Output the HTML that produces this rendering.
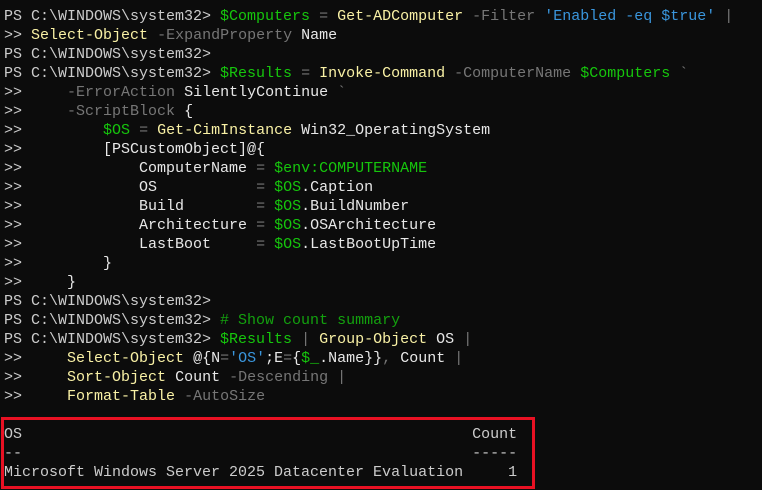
<!DOCTYPE html>
<html><head><meta charset="utf-8"><style>
html,body{margin:0;padding:0;background:#0c0c0c;width:762px;height:490px;overflow:hidden}
pre{margin:0;padding:7px 0 0 4px;font-family:"Liberation Mono",monospace;font-size:15px;line-height:19px;color:#cccccc;white-space:pre}
.g{color:#16c60c}.y{color:#f9f1a5}.d{color:#767676}.c{color:#3a96dd}.w{color:#e8e8e8}.cm{color:#13a10e}
.box{position:absolute;left:1px;top:417px;width:528px;height:66px;border:3px solid #e81123}
</style></head><body>
<pre>PS C:\WINDOWS\system32&gt; <span class="g">$Computers</span> <span class="d">=</span> <span class="y">Get-ADComputer</span> <span class="d">-Filter</span> <span class="c">'Enabled -eq $true'</span> <span class="d">|</span>
&gt;&gt; <span class="y">Select-Object</span> <span class="d">-ExpandProperty</span> <span class="w">Name</span>
PS C:\WINDOWS\system32&gt;
PS C:\WINDOWS\system32&gt; <span class="g">$Results</span> <span class="d">=</span> <span class="y">Invoke-Command</span> <span class="d">-ComputerName</span> <span class="g">$Computers</span> <span class="d">`</span>
&gt;&gt;     <span class="d">-ErrorAction</span> <span class="w">SilentlyContinue</span> <span class="d">`</span>
&gt;&gt;     <span class="d">-ScriptBlock</span> <span class="w">{</span>
&gt;&gt;         <span class="g">$OS</span> <span class="d">=</span> <span class="y">Get-CimInstance</span> <span class="w">Win32_OperatingSystem</span>
&gt;&gt;         <span class="w">[PSCustomObject]@{</span>
&gt;&gt;             <span class="w">ComputerName</span> <span class="d">=</span> <span class="g">$env:COMPUTERNAME</span>
&gt;&gt;             <span class="w">OS</span>           <span class="d">=</span> <span class="g">$OS</span><span class="w">.Caption</span>
&gt;&gt;             <span class="w">Build</span>        <span class="d">=</span> <span class="g">$OS</span><span class="w">.BuildNumber</span>
&gt;&gt;             <span class="w">Architecture</span> <span class="d">=</span> <span class="g">$OS</span><span class="w">.OSArchitecture</span>
&gt;&gt;             <span class="w">LastBoot</span>     <span class="d">=</span> <span class="g">$OS</span><span class="w">.LastBootUpTime</span>
&gt;&gt;         <span class="w">}</span>
&gt;&gt;     <span class="w">}</span>
PS C:\WINDOWS\system32&gt;
PS C:\WINDOWS\system32&gt; <span class="cm"># Show count summary</span>
PS C:\WINDOWS\system32&gt; <span class="g">$Results</span> <span class="d">|</span> <span class="y">Group-Object</span> <span class="w">OS</span> <span class="d">|</span>
&gt;&gt;     <span class="y">Select-Object</span> <span class="w">@{N</span><span class="d">=</span><span class="c">'OS'</span><span class="w">;E</span><span class="d">=</span><span class="w">{</span><span class="g">$_</span><span class="w">.Name}}</span><span class="d">,</span> <span class="w">Count</span> <span class="d">|</span>
&gt;&gt;     <span class="y">Sort-Object</span> <span class="w">Count</span> <span class="d">-Descending</span> <span class="d">|</span>
&gt;&gt;     <span class="y">Format-Table</span> <span class="d">-AutoSize</span>

OS                                                  Count
--                                                  -----
Microsoft Windows Server 2025 Datacenter Evaluation     1
</pre>
<div class="box"></div>
</body></html>
